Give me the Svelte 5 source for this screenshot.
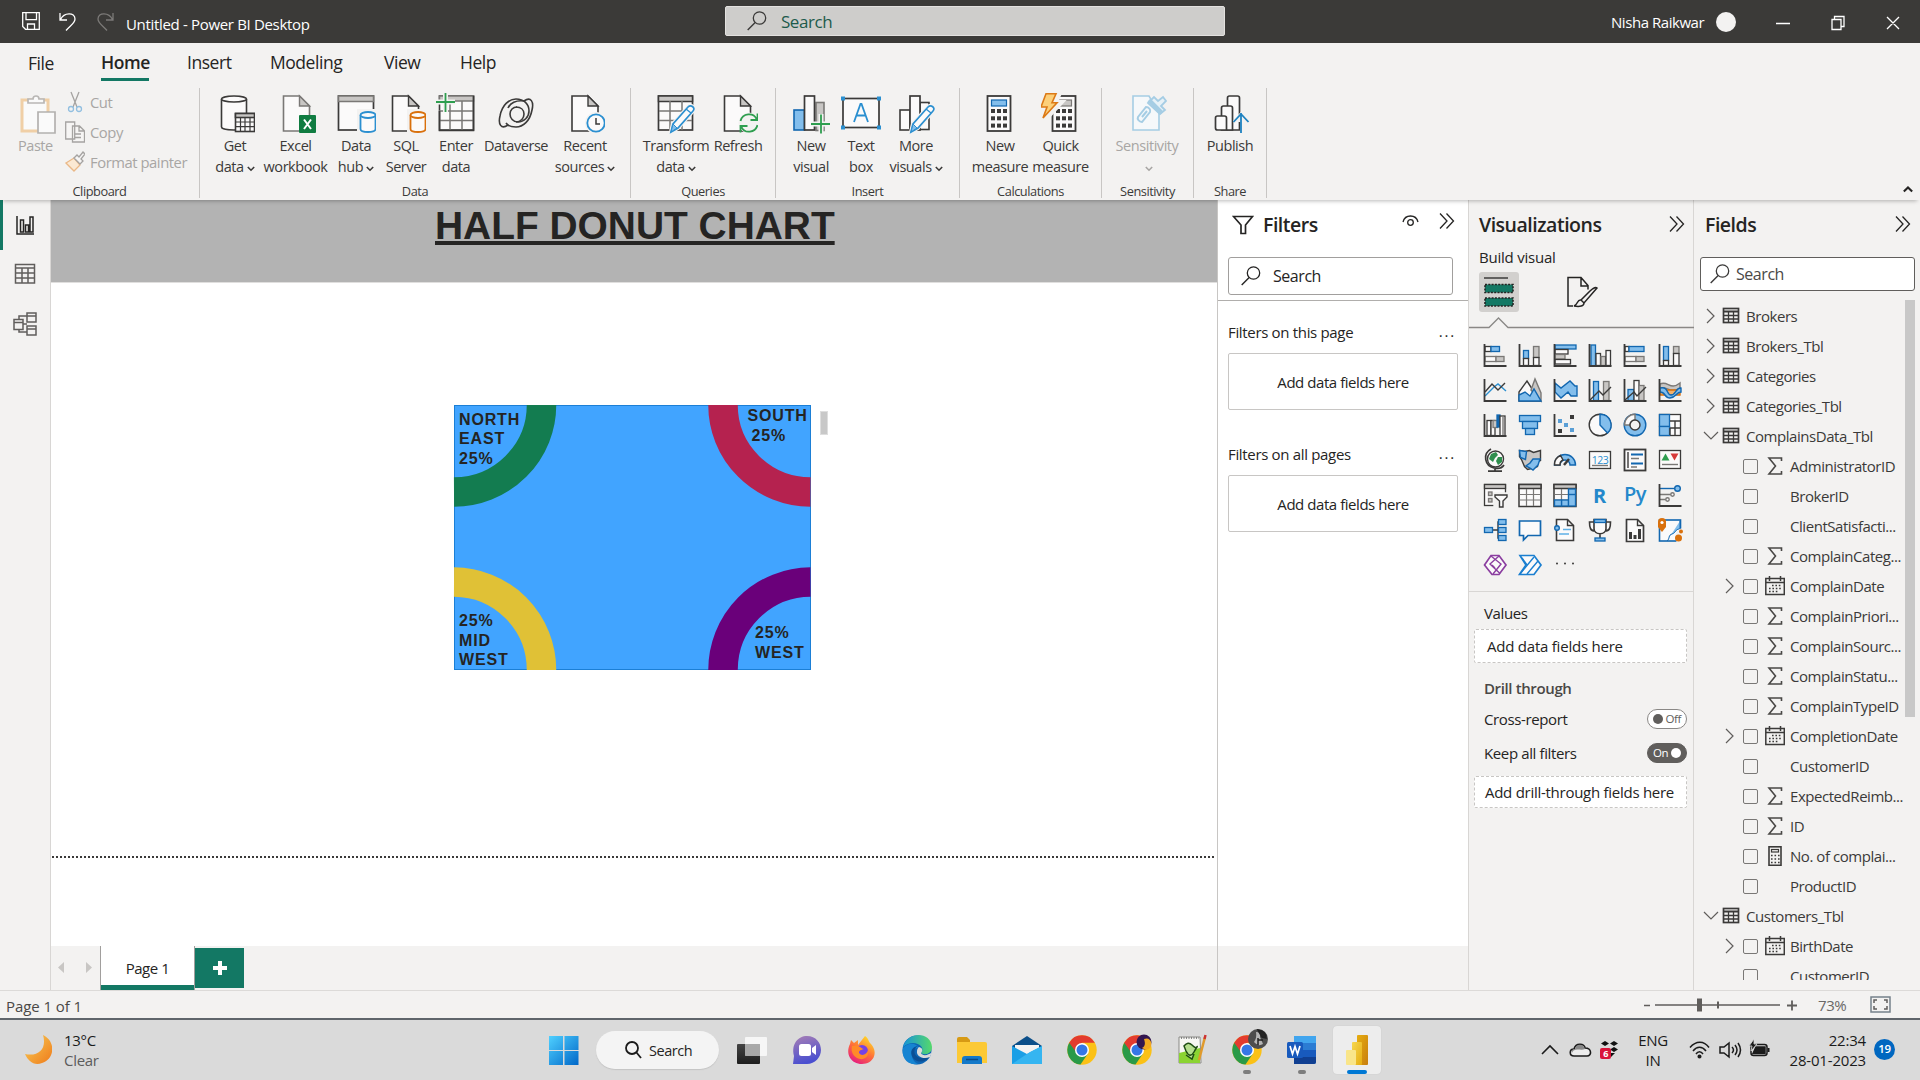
<script>
  // Shared icon colours
  const K = '#3b3a39', W = '#fbfafa', B = '#83beec', BS = '#1267b0', G = '#c8c6c4', GS = '#7a7876', A = '#2b8fd0';
  const r = (x, y, w, h, f = W, s = K, sw = 1.3) =>
    `<rect x="${x}" y="${y}" width="${w}" height="${h}" fill="${f}" stroke="${s}" stroke-width="${sw}"/>`;
  const p = (d, s = K, f = 'none', sw = 1.4) =>
    `<path d="${d}" fill="${f}" stroke="${s}" stroke-width="${sw}"/>`;
  const c = (x, y, rad, f = W, s = K, sw = 1.4) =>
    `<circle cx="${x}" cy="${y}" r="${rad}" fill="${f}" stroke="${s}" stroke-width="${sw}"/>`;
  const cyl = (x, y, w, h, s, sw = 1.6) =>
    p(`M${x} ${y + 3}v${h - 6}c0 4 ${w} 4 ${w} 0v-${h - 6}`, s, W, sw) +
    `<ellipse cx="${x + w / 2}" cy="${y + 3}" rx="${w / 2}" ry="3" fill="${W}" stroke="${s}" stroke-width="${sw}"/>`;
  const page = (x, y, w = 26, h = 35, s = K) =>
    p(`M${x} ${y}h${w - 10}l10 10v${h - 10}h-${w}z`, s, W, 1.6) + p(`M${x + w - 10} ${y}v10h10z`, s, G, 1.4);
  const pencil = (x, y) =>
    p(`M${x} ${y}l2-8 15-17c3-3 8 1 5 4l-15 17z`, '#f3f2f1', '#f3f2f1', 4) +
    p(`M${x} ${y}l2-8 15-17c3-3 8 1 5 4l-15 17z`, A, W, 1.7) + p(`M${x} ${y}l2-8 4 4z`, A, B, 1) + p(`M${x + 15} ${y - 23}l5 4`, A);
  const calc = (x, y, top) => {
    let o = r(x, y, 23, 35, W, K, 1.8) + r(x + 4, y + 4, 15, 6, top, top === G ? GS : BS, 1.2);
    for (let i = 0; i < 3; i++) for (let j = 0; j < 3; j++) o += `<rect x="${x + 3.5 + j * 6}" y="${y + 13 + i * 7.3}" width="4" height="4" fill="${K}"/>`;
    return o;
  };

  const rib = {
    get: cyl(6.5, 3, 25, 34, K) + r(20.5, 20.5, 19, 18, W, K, 1.6) + r(20.5, 20.5, 19, 4, G, K, 1.6) + p('M20 29h20M20 33.700h20M25.500 24v14M30 24v14M35 24v14', K, 'none', 1.2),
    excel: page(7.5, 3, 26, 35, GS) + `<rect x="23" y="22" width="17" height="18" rx="1" fill="#107c41"/>` + p('M28 26.500l7 9.500M35 26.500l-7 9.500', '#fff', 'none', 2),
    hub: r(2.5, 3, 35, 34, W, K, 1.7) + r(2.5, 3, 35, 5.5, G, GS, 1.5) + r(22, 17, 18, 23, '#f3f2f1', '#f3f2f1', 2) + cyl(24.5, 19, 15, 20, A, 1.8),
    sql: page(6.5, 3, 26, 35) + r(22, 17, 18, 23, '#f3f2f1', '#f3f2f1', 2) + cyl(24.5, 19, 15, 20, '#d9700c', 1.8),
    enter: r(3.5, 3, 34, 34, W, K, 1.6) + r(3.5, 3, 34, 5, G, GS, 1.5) + p('M3 18h35M3 27.500h35M14 8v29M26 8v29', GS, 'none', 1.5) + p('M3.500 18v19.500h34V3', K, 'none', 1.6) + p('M0 9h19M9.500 0v19', '#f3f2f1', 'none', 5) + p('M0 9h19M9.500 0v19', '#2e9e4f', 'none', 1.8),
    dataverse: `<g fill="none" stroke="${K}" stroke-width="1.6"><path d="M12 32c-7 5-10-1-8-9C6 12 13 6 20 6c8 0 13 5 13 12 0 6-5 11-11 11-5 0-8-4-8-8 0-4 3-7 7-7"/><path d="M28 8c7-5 10 1 8 9-2 11-9 17-16 17-5 0-8-1-10-4M20 14c5 0 8 3 8 7 0 4-3 8-8 8M12 15c2-5 8-8 16-7"/></g>`,
    recent: page(7, 3, 26, 35) + c(31, 30, 10, '#f3f2f1', '#f3f2f1', 2) + c(31, 30, 8.7, W, A, 1.8) + p('M31 25v6h4', K, 'none', 1.5),
    transform: r(2.5, 3, 34, 34, W, K, 1.7) + r(2.5, 3, 34, 5.5, G, K, 1.5) + p('M3 18h33M3 27.500h33M14 8v29M26 8v29', GS, 'none', 1.5) + pencil(15, 39),
    refresh: page(6.5, 3, 26, 35) + c(31, 30, 10, '#f3f2f1', '#f3f2f1', 1) + p('M22.500 28c2-8 13-9 16-2M39.500 32c-2 8-13 9-16 2M39.500 20.500v6.500h-7M22.500 39.500v-6.500h7', '#2e9e4f', 'none', 1.8),
    newvisual: r(3, 17, 10.5, 20, B, BS, 1.6) + r(25, 9.500, 8, 28, G, GS, 1.6) + r(13.5, 3, 10, 34, W, K, 1.7) + p('M20 31h20M30 21v20', '#f3f2f1', 'none', 5) + p('M20 31h19M30 21.500v19', '#2e9e4f', 'none', 1.8),
    text: r(2, 5.5, 36, 29, W, K, 1.7) + [[2, 5.5], [38, 5.5], [2, 34.5], [38, 34.5]].map(([x, y]) => `<rect x="${x - 2}" y="${y - 2}" width="4" height="4" fill="${A}"/>`).join('') + p('M13 29l6.500-18h1l6.500 18M15.500 22.500h9', A, 'none', 1.8),
    more: r(4, 17, 10, 20, W, K, 1.6) + r(24, 9.500, 9, 27, W, K, 1.6) + r(14, 3, 10, 34, W, K, 1.7) + pencil(15, 39),
    newm: calc(7.5, 3, B),
    quick: calc(11.500, 3, G) + p('M8 0h11l-4 9h6L6 25l3-12H3z', '#f3f2f1', '#f3f2f1', 4) + p('M5 .8h10l-4 9h5L2 25l4-11H0z', '#dc7a17', '#fcd07a', 1.6),
    sens: p('M6 3h16l10 17v17H6z', '#a5cde4', '#f5f8fa', 1.6) + p('M11 24l8-10c3 0 5 3 4 5l-8 10c-3 0-5-3-4-5zM15 24l5-6', '#a5cde4', 'none', 2) + p('M21 10l6-6 4 4 5-4 3 4-5 5 4 4-5 4z', '#a5cde4', '#e6f1f7', 1.8) + p('M22 7l13 13', '#a5cde4', 'none', 4),
    publish: `<g fill="${W}" stroke="${K}" stroke-width="1.7"><path d="M17.500 37V5q0-2 2-2h8q2 0 2 2v32z"/><path d="M11.500 37V15q0-2 2-2h7q2 0 2 2v22z"/><path d="M5.500 35V25q0-2 2-2h7q2 0 2 2v12h-9q-2 0-2-2z"/></g>` + p('M24 29l7-8 8 8', '#f3f2f1', '#f3f2f1', 3) + p('M31 20v20M23.500 29l7.500-8 7.500 8', '#1e82c0', 'none', 1.8)
  };

  const groups = [
    { name: 'Data', w: 431, pad: 10, items: [['get', 'Get', 'data', 50, 1], ['excel', 'Excel', 'workbook', 71], ['hub', 'Data', 'hub', 50, 1], ['sql', 'SQL', 'Server', 50], ['enter', 'Enter', 'data', 50], ['dataverse', 'Dataverse', '', 70], ['recent', 'Recent', 'sources', 68, 1]] },
    { name: 'Queries', w: 145, pad: 9, items: [['transform', 'Transform', 'data', 72, 1], ['refresh', 'Refresh', '', 52]] },
    { name: 'Insert', w: 184, pad: 12, items: [['newvisual', 'New', 'visual', 46], ['text', 'Text', 'box', 54], ['more', 'More', 'visuals', 56, 1]] },
    { name: 'Calculations', w: 142, pad: 10, items: [['newm', 'New', 'measure', 60], ['quick', 'Quick', 'measure', 61]] },
    { name: 'Sensitivity', w: 92, pad: 8, off: true, items: [['sens', 'Sensitivity', '', 74, 1]] },
    { name: 'Share', w: 73, pad: 8, items: [['publish', 'Publish', '', 56]] }
  ];

  const ax = p('M1.500 1v22h22', K, 'none', 1.8);
  const grid = (f = W) => r(1, 1.5, 22, 22, f, K, 1.5) + r(1, 1.5, 22, 4, G, K, 1.5) + p('M1.500 11.500h21M1.500 17h21M8.500 6v17M15.500 6v17', GS, 'none', 1.2);
  const viz = [
    r(2, 13.500, 11, 5, W, GS) + r(13, 13.500, 8, 5, G, GS) + r(2, 3.500, 6, 5, W, K) + r(8, 3.500, 8.500, 5, B, BS) + ax,
    r(5.500, 7.500, 5, 8, B, BS) + r(5.500, 15.500, 5, 7, W) + r(15.500, 3.500, 5.500, 11, G, GS) + r(15.500, 14.500, 5.500, 8, W) + ax,
    r(2, 2, 21, 4, B, BS) + r(2, 6.500, 13, 4.500, W) + r(2, 11.500, 10, 4.500, G, GS) + r(2, 16.500, 15.500, 4.500, W) + ax,
    r(3, 2, 4.500, 21, B, BS) + r(8, 10.500, 4.500, 12, W) + r(13, 13.500, 4.500, 9, G, GS) + r(18, 7.500, 4.500, 15, W) + ax,
    r(2, 13.500, 11, 5, W, GS) + r(13, 13.500, 8, 5, G, GS) + r(2, 3.500, 4, 5, W) + r(6, 3.500, 15, 5, B, BS) + ax,
    r(5.500, 3.500, 5, 14, B, BS) + r(5.500, 17.500, 5, 5, W) + r(15.500, 3.500, 5.500, 7, G, GS) + r(15.500, 10.500, 5.500, 12, W) + ax,
    p('M2 18l9-9 4-3 8 7', A) + p('M2 14l7-8 6 6 7-7', K) + ax,
    p('M1 23V14L9 3l13 20z', K, W) + p('M13 12l4-11 6 14v8z', GS, G) + p('M1 23v-6l6-3 5 4 4-7 7 12z', BS, B),
    p('M2 5l6 5 9-7 5 5h2v10h-6l-3-4-7 6-6-6z', BS, B) + ax,
    r(5.500, 3.500, 5, 19, B, BS) + r(15.500, 3.500, 5.500, 19, G, GS) + p('M2 22l9-9 4 4 8-8', K) + ax,
    r(5, 11.500, 6, 11, B, BS) + r(11, 2.500, 5, 20, W) + r(16, 7.500, 5, 15, G, GS) + p('M2 22l9-8 3 4 9-9', K) + ax,
    p('M2 6c8-4 10 7 20-1v5c-10 6-13-2-20 0z', GS, G) + p('M2 12h20v5H2z', '#d9700c', '#f4b26b') + p('M2 10c9-2 6 7 11 7s5-8 10-7v4c-5 0-5 6-11 6S8 14 2 14z', BS, B) + ax,
    r(4, 7.500, 4, 15, W) + r(8, 7.500, 4, 15, W) + r(10, 7.500, 4.500, 7, G, GS) + r(14, 2, 3, 12, '#1267b0', BS) + r(17, 3, 5, 20, W) + p('M20 3v20', GS) + ax,
    r(1.500, 2.500, 21, 6, B, BS) + r(4.500, 8.500, 15, 7, B, BS) + r(7.500, 15.500, 9, 6, B, BS),
    ax + `<path d="M17 2h4v4h-4zM5 16h4v4H5z" fill="${K}"/><path d="M5 6h4v4H5zM11 10h4v4h-4zM17 15h4v4h-4z" fill="#5a9fd6"/>`,
    c(12, 12, 10.800) + p('M12 12V1.200A10.800 10.800 0 0 1 19.500 20z', BS, B),
    c(12, 12, 10.800, B, BS) + p('M1.500 12A10.500 10.500 0 0 1 12 1.300V7a5 5 0 0 0-5 5z', GS, W) + c(12, 12, 5, '#f3f2f1', K),
    r(1.500, 1.500, 21, 21, W) + r(1.500, 1.500, 10, 12, B, BS) + r(1.500, 13.500, 10, 9, B, BS) + p('M12 8h10M17 8v14M12 15h5M17 15h5M12 15v7', K),
    c(12.500, 11, 8, W) + `<path d="M8 6l5-2 2 3-3 3-2 4-4-3zM15 9l4 0 0 5-4 3-2-4z" fill="#2f8f4e"/>` + p('M8 1C-1 6 2 18 11 20c4 1 8 0 10-3M12 20v3M5 23.200h14', K, 'none', 1.700),
    p('M1.500 2.500l5 1 5-1 4 2 7-2v10l-3 1v5l-6 2-4 1-3-3-3-7-2-3z', K, G) + p('M1.500 2.500l7 1-1 8 -5-2zM12 15l3-4h7l-2 6-5 5-3-2-4-2z', BS, B),
    p('M1.500 17a10.500 10.500 0 0 1 21 0h-5.500a5 5 0 0 0-10 0z', BS, B) + p('M1.500 17a10 10 0 0 1 6-9.500l2.500 4.500a5 5 0 0 0-3 5z', K, W) + p('M11 17l5-6', K, 'none', 2.500),
    r(1.500, 3.500, 21, 17, W) + `<text x="12" y="15.500" text-anchor="middle" font-family="Open Sans, sans-serif" font-size="10.500" fill="${A}">123</text>` + p('M4 17.500h16', GS),
    r(1.500, 1.500, 21, 21, W, K, 1.800) + p('M5 4v16', K) + p('M8 6.500h12M8 15.500h12', BS, 'none', 2) + p('M8 10.500h8M8 19h6', GS),
    r(1.500, 2.500, 21, 18, W) + `<path d="M3.500 12.500l4-7 4 7z" fill="#2f9e4f"/><path d="M12.500 5.500h8l-4 7z" fill="#d63a3a"/>` + p('M4 16.500h16', GS),
    r(1.500, 1.500, 21, 21, W) + r(1.500, 1.500, 21, 4, G) + r(5.500, 9, 3.500, 3.500, G, GS) + r(5.500, 15.500, 3.500, 3.500, G, GS) + p('M11 24V10h13v14z', '#f3f2f1', '#f3f2f1') + p('M12 12h12v2l-4 4v6h-3.500v-6l-4.500-4z', K, W),
    grid(),
    grid() + r(8.500, 17, 7, 6, B, BS) + r(15.500, 6, 7, 17, B, BS) + r(1.500, 17, 7, 6, B, BS) + p('M16 11.500h6', BS),
    `<text x="11.500" y="20" text-anchor="middle" font-family="Open Sans, sans-serif" font-weight="700" font-size="20" fill="#2488cb">R</text>`,
    `<text x="12" y="18" text-anchor="middle" font-family="Open Sans, sans-serif" font-weight="600" font-size="20" fill="#2488cb">Py</text>`,
    p('M2 5.500h16', BS) + c(19.500, 5.500, 2.800, B, BS) + p('M2 11.500h11M2 16.500h6', GS) + c(14.500, 11.500, 1.700, W, GS) + c(9.500, 16.500, 1.700, W, GS) + ax,
    p('M10 12h5V4h2M15 12v8h2M15 12h2', K) + r(1.500, 9.500, 8, 5, B, BS) + r(15.500, 1.500, 7.500, 5, B, BS) + r(15.500, 9.500, 7.500, 5, B, BS) + r(15.500, 17.500, 7.500, 5, B, BS),
    p('M1.500 3h21v14.500H10L5.500 22v-4.500h-4z', BS, W, 1.700),
    p('M3.500 8V1.500h11l6 6v15H3.500V12', K, W, 1.600) + p('M14.500 1.500v6h6', K) + c(4, 10, 2.300, B, BS) + p('M10 11.500h8M6 16h10', '#5fb0e6'),
    p('M6 1.500h12v9c0 7-12 7-12 0zM6 4H1.500c0 6 1 9 5.500 9M18 4h4.500c0 6-1 9-5.500 9M12 16v4', K, W, 1.600) + r(6.500, 1.500, 11, 3, B, BS) + r(7, 20, 10, 3, B, BS),
    p('M3.500 1.500h11l6 6v16h-17z', K, W, 1.700) + p('M14.500 1.500v6h6', K) + `<path d="M6 14h3v7H6zM10.500 17h3v4h-3zM15 11h3v10h-3z" fill="${K}"/>`,
    r(1.500, 2, 21, 21, W, BS, 1.600) + p('M22 3v8c-5 0-4 4-8 5s-2 5-5 7', BS, B, 1) + p('M19 24h6V11h-2c-3 1-4 3-5 6z', '#f3f2f1', '#f3f2f1', 1) + `<path d="M0 4q0-4 4-4t4 4v5l-4 5-4-5z" fill="#d9700c"/><circle cx="4" cy="4.500" r="1.600" fill="#fff"/><circle cx="20.500" cy="20" r="3.500" fill="#d9700c"/><circle cx="23" cy="13.500" r="2" fill="#d9700c"/>`,
    p('M1.500 12L8 2.500h8l7 9.500-7 9.500H9z', '#8b3ea0', W, 1.700) + p('M8 3l10 8-8 10M16 3L7 11l10 9.500M9 12l3 3', '#8b3ea0'),
    p('M2 2.500h14l7 9.500-7 9.500H1.500L8 12z', '#1b7fd0', W, 1.700) + p('M2 21l14-17M9 21L20 8M9 12L4 5', '#1b7fd0'),
    `<g fill="${K}"><circle cx="4" cy="10.500" r="1"/><circle cx="12" cy="10.500" r="1"/><circle cx="20" cy="10.500" r="1"/></g>`
  ];

  // level, open state, icon, label
  const fields = [
    [0, '>', 'table', 'Brokers'], [0, '>', 'table', 'Brokers_Tbl'], [0, '>', 'table', 'Categories'], [0, '>', 'table', 'Categories_Tbl'],
    [0, 'v', 'table', 'ComplainsData_Tbl'], [1, '', 'sum', 'AdministratorID'], [1, '', '', 'BrokerID'], [1, '', '', 'ClientSatisfacti...'],
    [1, '', 'sum', 'ComplainCateg...'], [1, '>', 'date', 'ComplainDate'], [1, '', 'sum', 'ComplainPriori...'], [1, '', 'sum', 'ComplainSourc...'],
    [1, '', 'sum', 'ComplainStatu...'], [1, '', 'sum', 'ComplainTypeID'], [1, '>', 'date', 'CompletionDate'], [1, '', '', 'CustomerID'],
    [1, '', 'sum', 'ExpectedReimb...'], [1, '', 'sum', 'ID'], [1, '', 'calc', 'No. of complai...'], [1, '', '', 'ProductID'],
    [0, 'v', 'table', 'Customers_Tbl'], [1, '>', 'date', 'BirthDate'], [1, '', '', 'CustomerID']
  ];
  const fi = {
    table: r(2.500, 2.500, 15, 14, 'none', K, 1.700) + p('M2 5.500h16', K, 'none', 2) + p('M2 9.500h16M2 13h16M7.500 5v12M12.500 5v12', K, 'none', 1.300),
    sum: p('M16.500 5V2H4l6.500 8L4 18h12.500v-3', '#4a4846', 'none', 1.600),
    date: r(.8, 2.500, 18.500, 16, 'none', K, 1.500) + p('M1 6.500h18M4.500 0v5M15.500 0v5', K, 'none', 1.500) + p('M7 9.500h10M4 12.500h13M4 15.500h10', K, 'none', 1.600).replace('/>', ' stroke-dasharray="1.600 1.800"/>'),
    calc: r(4, .8, 12, 18.500, 'none', K, 1.600) + r(6.500, 3.500, 7, 2.500, 'none', K, 1.200) + p('M6 9.500h9M6 13h9M6 16.500h9', K, 'none', 1.600).replace('/>', ' stroke-dasharray="1.600 1.900"/>')
  };

  const chrome = `<circle cx="15" cy="15" r="14.700" fill="#fbc116"/><path d="M15 15L2.200 7.700A14.700 14.700 0 0 0 13.500 29.600L21 18.500z" fill="#299a48"/><path d="M2.200 7.700A14.700 14.700 0 0 1 27.800 7.700H15L9 17z" fill="#e33b2e"/><circle cx="15" cy="15" r="7" fill="#fff"/><circle cx="15" cy="15" r="5.500" fill="#3577e5"/>`;
  const apps = [
    { i: `<defs><linearGradient id="tv" y2="1" x2="0"><stop stop-color="#444"/><stop offset="1" stop-color="#1d1d1d"/></linearGradient></defs><rect x="0" y="9" width="23" height="20" rx="1" fill="url(#tv)"/><rect x="8" y="2" width="22" height="19" rx="1" fill="#fff" fill-opacity=".75"/><path d="M8 9h15v12H8z" fill="#999" fill-opacity=".7"/>` },
    { i: `<defs><linearGradient id="ct" x2=".3" y2="1"><stop stop-color="#a87fb4"/><stop offset="1" stop-color="#4a4fd0"/></linearGradient></defs><path d="M1 29l1-8C-1 9 6 1 15 1s14 7 14 14-6 14-14 14z" fill="url(#ct)"/><rect x="7" y="9" width="12" height="12" rx="2.500" fill="#fff"/><path d="M20 13l4-3v10l-4-3z" fill="#fff"/>` },
    { i: `<defs><linearGradient id="ff" x1=".8" x2=".2" y2="1"><stop stop-color="#ffe226"/><stop offset=".5" stop-color="#ff7139"/><stop offset="1" stop-color="#e31587"/></linearGradient></defs><path d="M18 1c4 3 3 5 6 8 8 9 2 20-9 20S-2 19 3 9l1-4 3 3 4-3v5z" fill="url(#ff)"/><circle cx="15" cy="16" r="6" fill="#7542e5"/><path d="M5 11c7-2 8 2 12 3-3 1-5 1-5 4 3 4 8 1 9-3 2 8-6 11-11 8s-6-8-5-12z" fill="#ff8a28"/>` },
    { i: `<defs><linearGradient id="eg" x2="1"><stop stop-color="#1793d8"/><stop offset="1" stop-color="#55d96b"/></linearGradient></defs><circle cx="15" cy="15" r="14.500" fill="#0d65b5"/><path d="M1 12C5-4 29-4 30 12c0 6-6 9-11 6 6-7-8-15-18-6z" fill="url(#eg)"/><path d="M1 13c6-7 14-4 16 0-7-2-11 11-1 16C4 31-1 21 1 13z" fill="#1684d2"/><path d="M17 11c-7 1-6 12 3 12 4 0 6-1 8-2-3 6-12 8-17 2-4-6-1-12 6-12z" fill="#0b4f95"/><path d="M17 12c4 1 4 4 2 6 1 3 7 3 11-1l-2 5c-7 3-14-1-13-6 0-2 1-3 2-4z" fill="#dadada"/>` },
    { i: `<path d="M0 4q0-2 2-2h8l3 3v9H0z" fill="#d79a14"/><path d="M0 7h28q2 0 2 2v19H0z" fill="#fcc935"/><path d="M5 29v-5q0-3 3-3h14q3 0 3 3v5z" fill="#1479c9"/><path d="M9 24.500h12" stroke="#0a4a86" stroke-width="1.500"/>` },
    { i: `<path d="M0 11L15 1l15 10v18H0z" fill="#0b4f8a"/><path d="M3 10h24v12H3z" fill="#f3f3f3"/><path d="M0 11l15 8 15-8v18H0z" fill="#1a9fe6"/><path d="M0 29L18 17l12-6v18z" fill="#35b5f1"/>` },
    { i: chrome },
    { i: chrome + `<circle cx="22" cy="7" r="7.500" fill="#33164f"/><path d="M22 4c7-3 9 6 6 9s-6 1-8 0c4-2 3-6 2-9z" fill="#f2a921"/>` },
    { i: `<path d="M2 2h21l1 26H2z" fill="#f7f7f4" stroke="#8a8a86" stroke-width="1"/><path d="M2 18l21-5v15H2z" fill="#8bd432"/><path d="M7 11q4-5 8-1t5 2-3 5-8-1zM9 20l6 4 2-5" stroke="#1f4d14" stroke-width="1.500" fill="#b6df8f"/><path d="M4 3h18" stroke="#666" stroke-width="1.500" stroke-dasharray="1 1.500"/><path d="M28 2L22 25" stroke="#e09a2b" stroke-width="2.500"/><path d="M28.500 0l-1 4" stroke="#c33" stroke-width="2.500"/>` },
    { i: chrome + `<circle cx="26" cy="4" r="10" fill="#4d4d4d"/><path d="M24-3q5 0 4 5l3 7q-5 3-9-2 3-4 2-10z" fill="#b5b5b5"/><path d="M26-5q8 1 8 8l-4-1zM26 5h5M26 3v7" stroke="#222" fill="#252525" stroke-width="1.500"/>`, dot: true },
    { i: `<rect x="7" y="1" width="22" height="28" rx="2" fill="#2b7cd3"/><path d="M7 1h22v7H7z" fill="#41a5ee"/><path d="M7 15h22v7H7z" fill="#185abd"/><path d="M7 22h22v5q0 2-2 2H7z" fill="#103f91"/><rect x="0" y="7" width="16" height="16" rx="1.500" fill="#185abd"/><path d="M3 11l2.500 8L8 11.500 10.500 19 13 11" stroke="#fff" stroke-width="1.700" fill="none"/>`, dot: true },
    { i: `<defs><linearGradient id="pb" y2="1"><stop stop-color="#e6ad10"/><stop offset="1" stop-color="#c87e0e"/></linearGradient><linearGradient id="pc" y2="1"><stop stop-color="#f6d751"/><stop offset="1" stop-color="#e6ad10"/></linearGradient></defs><rect x="15" y="0" width="11" height="30" rx="1" fill="url(#pb)"/><rect x="10" y="7" width="10" height="23" rx="1" fill="url(#pc)"/><rect x="4" y="15" width="10" height="15" rx="1" fill="#f9e589"/>`, active: true }
  ];
</script>

{#snippet chev(cls)}
  <svg class="chev {cls}" viewBox="0 0 10 7" width="8" height="6"><path d="M1 1l4 4 4-4" fill="none" stroke="currentColor" stroke-width="2" /></svg>
{/snippet}
{#snippet glass(size, color)}
  <svg width={size} height={size} viewBox="0 0 20 20"><circle cx="12.500" cy="7" r="6.200" fill="none" stroke={color} stroke-width="1.300" /><path d="M8.200 11.600L.7 19" stroke={color} stroke-width="1.400" /></svg>
{/snippet}
{#snippet dbl()}
  <svg width="18" height="18" viewBox="0 0 18 18"><path d="M2 1.500l7 7.500-7 7.500M8.500 1.500l7 7.500-7 7.500" fill="none" stroke="#252423" stroke-width="1.300" /></svg>
{/snippet}

<div class="app">
  <header class="title">
    <div class="quick">
      <svg width="18" height="18" viewBox="0 0 18 18" fill="none" stroke="#fff" stroke-width="1.300"><path d="M.7.7h16.600v16.600H3.500L.7 14.500zM4 .7v7h10.500v-7M5.500 17v-5h7v5" /></svg>
      <svg width="18" height="19" viewBox="0 0 18 19" fill="none" stroke="#fff" stroke-width="1.300"><path d="M1 1v7h7M1.500 7.500C5 0 16 0 16 7c0 4-4 6-9 11.500" /></svg>
      <svg width="18" height="19" viewBox="0 0 18 19" fill="none" stroke="#7c7a78" stroke-width="1.300"><path d="M17 1v7h-7M16.500 7.500C13 0 2 0 2 7c0 4 4 6 9 11.500" /></svg>
    </div>
    <span class="doc">Untitled - Power BI Desktop</span>
    <div class="tsearch">{@render glass(20, '#3b3a39')}<span>Search</span></div>
    <span class="user">Nisha Raikwar</span>
    <i class="avatar"></i>
    <svg class="win" width="126" height="16" viewBox="0 0 126 16" fill="none" stroke="#fff" stroke-width="1.300"><path d="M1 8.500h14M57 4.500h9v10h-9zM59.500 4V1.500h9.500v10h-3M112 2l12 12M124 2l-12 12" /></svg>
  </header>

  <nav class="tabs">
    <span class="t-file">File</span><span class="t-home">Home</span><span class="t-ins">Insert</span><span class="t-mod">Modeling</span><span class="t-view">View</span><span>Help</span>
  </nav>

  <section class="ribbon">
    <div class="group clip">
      <div class="cliprow">
        <div class="paste">
          <svg width="40" height="40" viewBox="0 0 40 40"><g fill="#fafafa" stroke-width="1.700"><path d="M4 6h26v31H4z" stroke="#f0cfa6" stroke-width="3" /><path d="M10 9V5h5c0-4 6-4 6 0h5v4z" stroke="#b9b7b5" /><path d="M20 18h17v21H20z" stroke="#b3b1af" /></g></svg>
          <span>Paste</span>
        </div>
        <div class="clips">
          <div><svg width="20" height="22" viewBox="0 0 20 22" fill="none" stroke="#a5a3a1" stroke-width="1.300"><path d="M6 1l6 15M14 1L8 16" /><circle cx="6" cy="18" r="2.500" stroke="#92bfe0" /><circle cx="14" cy="18" r="2.500" stroke="#92bfe0" /></svg><span>Cut</span></div>
          <div><svg width="20" height="22" viewBox="0 0 20 22" fill="#f6f5f4" stroke="#a5a3a1" stroke-width="1.300"><path d="M.7 1h9v17h-9zM7.500 5h7l5 5v11h-12zM14 5v5h5M10 13h6M10 16.500h6" /></svg><span>Copy</span></div>
          <div><svg width="20" height="22" viewBox="0 0 20 22" fill="#f6f5f4" stroke="#a5a3a1" stroke-width="1.300"><path d="M1 12l8-5 6 7-6 6z" fill="#fbe9d3" stroke="#eab887" /><path d="M9 7l3-3 2 2 4-5 2 2-4 5 2 2-3 3z" /></svg><span>Format painter</span></div>
        </div>
      </div>
      <div class="gname">Clipboard</div>
    </div>
    {#each groups as g}
      <div class="group" class:off={g.off} style:width="{g.w}px">
        <div class="items" style:padding-left="{g.pad}px">
          {#each g.items as [icon, a, b, w, drop]}
            <div class="item" style:width="{w}px">
              <svg width="40" height="42" viewBox="0 0 40 42">{@html rib[icon]}</svg>
              <span>{a}</span>
              <span>{b}{#if drop}{@render chev(b ? '' : 'solo')}{/if}</span>
            </div>
          {/each}
        </div>
        <div class="gname">{g.name}</div>
      </div>
    {/each}
    <div class="collapse">{@render chev('up')}</div>
  </section>

  <main>
    <aside class="rail">
      <div class="on"><svg width="24" height="24" viewBox="0 0 24 24" fill="none" stroke="#252423" stroke-width="1.500"><path d="M4 3v18h17M7.500 7h3v12h-3zM12.500 12h3v7h-3zM17 4h3v15h-3z" /></svg></div>
      <div><svg width="24" height="24" viewBox="0 0 24 24" fill="none" stroke="#605e5c" stroke-width="1.500"><path d="M2.500 2.500h19v18.500h-19zM2 6h20M2 11h20M2 16h20M9 6v15M15 6v15" /></svg></div>
      <div><svg width="26" height="26" viewBox="0 0 26 26" fill="none" stroke="#605e5c" stroke-width="1.500"><path d="M2 8.500h9v10H2zM2 11.500h9M15 2h9v9h-9zM15 5h9M15 15h9v9h-9zM15 18h9M11 13h4M7 8V5h8M7 18v3h8" /></svg></div>
    </aside>

    <section class="work">
      <div class="banner"><h1>HALF DONUT CHART</h1></div>
      <div class="canvas">
        <svg class="donut" width="376" height="268" viewBox="453 404 376 268" font-family="Liberation Sans, Arial, sans-serif" font-weight="700" font-size="16" letter-spacing=".85" fill="#252423">
          <rect x="454.500" y="405.500" width="356" height="264" fill="#41a4ff" stroke="#1b7fd6" />
          <g fill="none" stroke-width="29.500">
            <path d="M454 492A88 87 0 0 0 541.500 405" stroke="#137c50" />
            <path d="M723 405A88 87 0 0 0 810.500 492" stroke="#b5224f" />
            <path d="M454 582A88 88 0 0 1 541.500 670" stroke="#e0c136" />
            <path d="M810.500 582A88 88 0 0 0 723 670" stroke="#6a007a" />
          </g>
          <text x="459" y="425">NORTH</text><text x="459" y="444">EAST</text><text x="459" y="464">25%</text>
          <text x="747.500" y="421">SOUTH</text><text x="751.500" y="441">25%</text>
          <text x="459" y="626">25%</text><text x="459" y="646">MID</text><text x="459" y="665">WEST</text>
          <text x="755" y="638">25%</text><text x="755" y="658">WEST</text>
          <rect x="820.500" y="411.500" width="7" height="23" fill="#c8c8c8" stroke="#dedede" />
        </svg>
        <div class="dots"></div>
      </div>
      <div class="pages">
        <svg width="49" height="44" viewBox="0 0 49 44" fill="#c8c6c4"><path d="M13 16v11l-6-5.500zM35 16v11l6-5.500z" /></svg>
        <div class="ptab">Page 1</div>
        <div class="padd"><svg width="16" height="16" viewBox="0 0 16 16"><path d="M8 1v14M1 8h14" stroke="#fff" stroke-width="4" /></svg></div>
      </div>
    </section>

    <section class="filters">
      <div class="fhead">
        <svg width="22" height="20" viewBox="0 0 22 20"><path d="M1.500 1.500h19l-7 8.500v8.500h-4.500V10z" fill="none" stroke="#252423" stroke-width="1.700" /></svg>
        <h2>Filters</h2>
        <svg class="eye" width="17" height="12" viewBox="0 0 17 12" fill="none" stroke="#252423" stroke-width="1.300"><path d="M1 7c2-8 13-8 15 0" /><circle cx="8.500" cy="7.500" r="2.800" /></svg>
        <span class="fd">{@render dbl()}</span>
      </div>
      <div class="fsearch">{@render glass(20, '#252423')}<span>Search</span></div>
      <div class="fblock first"><div class="flabel"><span>Filters on this page</span><b>...</b></div><div class="drop">Add data fields here</div></div>
      <div class="fblock"><div class="flabel"><span>Filters on all pages</span><b>...</b></div><div class="drop">Add data fields here</div></div>
    </section>

    <section class="viz">
      <div class="vhead"><h2>Visualizations</h2>{@render dbl()}</div>
      <div class="bv">Build visual</div>
      <div class="modes">
        <div class="build"><svg width="32" height="32" viewBox="0 0 32 32"><path d="M1 2h24" stroke="#252423" stroke-width="1.300" /><path d="M2 8.500h28v8H2zM2 22h28v8H2z" fill="#137864" stroke="#252423" stroke-width="1.600" stroke-dasharray="2 1.300" /></svg></div>
        <svg width="32" height="32" viewBox="0 0 32 32" fill="none" stroke="#252423" stroke-width="1.500"><path d="M7 30H2V1.500h13l7 8v4M15 1.500V10h7M31 12L18 27l-3-3 9-9c3-3 6-4 7-3zM15 24c-4-1-3 5-7 6 6 1 10 0 10-3" /></svg>
      </div>
      <svg class="notch" width="225" height="12" viewBox="0 0 225 12"><path d="M0 9.500h20l9.500-9.500 9.500 9.500h186" fill="none" stroke="#8a8886" stroke-width="1.300" /></svg>
      <div class="vgrid">
        {#each viz as v}<svg width="24" height="24" viewBox="0 0 24 24" overflow="visible">{@html v}</svg>{/each}
      </div>
      <div class="wells">
        <div class="wl">Values</div>
        <div class="well a">Add data fields here</div>
        <div class="wl drill">Drill through</div>
        <div class="wl row"><span>Cross-report</span><span class="tog"><i></i>Off</span></div>
        <div class="wl row k"><span>Keep all filters</span><span class="tog onn">On<i></i></span></div>
        <div class="well b">Add drill-through fields here</div>
      </div>
    </section>

    <section class="fields">
      <div class="vhead"><h2>Fields</h2>{@render dbl()}</div>
      <div class="fsearch s2">{@render glass(20, '#3b3a39')}<span>Search</span></div>
      <div class="list">
        <div class="tree">
          {#each fields as [lvl, st, ic, label]}
            <div class="frow" class:child={lvl}>
              <span class="ar">
                {#if st === '>'}<svg width="10" height="16" viewBox="0 0 10 16"><path d="M1 1l7 7-7 7" fill="none" stroke="#605e5c" stroke-width="1.200" /></svg>
                {:else if st === 'v'}<svg width="16" height="10" viewBox="0 0 16 10"><path d="M1 1l7 7 7-7" fill="none" stroke="#605e5c" stroke-width="1.200" /></svg>{/if}
              </span>
              {#if lvl}<i class="cb"></i>{/if}
              <svg class="fic" width="20" height="20" viewBox="0 0 20 20">{@html fi[ic] ?? ''}</svg>
              <span class="fl">{label}</span>
            </div>
          {/each}
        </div>
        <div class="sb"></div>
      </div>
    </section>
  </main>

  <footer class="status">
    <span class="pg">Page 1 of 1</span>
    <svg width="160" height="20" viewBox="0 0 160 20" fill="none" stroke="#605e5c"><path d="M4 10.500h6M15 10h125" stroke-width="1.500" /><path d="M147 10.500h10M152 5.500v10" stroke-width="1.800" /><path d="M59.500 3.500v13" stroke-width="5" /><path d="M78 6.500v7" stroke-width="2" /></svg>
    <span class="pct">73%</span>
    <svg width="21" height="17" viewBox="0 0 21 17" fill="none" stroke="#605e5c" stroke-width="1.500"><path d="M1 1h19v15H1z" stroke="#76818a" /><path d="M4 7V4h3M14 4h3v3M17 10v3h-3M7 13H4v-3" /></svg>
  </footer>

  <footer class="task">
    <div class="weather">
      <svg width="28" height="30" viewBox="0 0 28 30"><defs><linearGradient id="mn" y2="1"><stop stop-color="#f8cf57" /><stop offset="1" stop-color="#ef7a1a" /></linearGradient></defs><path d="M19 0c13 6 12 24-1 28C10 31 4 26 1 19c14 3 22-6 18-19z" fill="url(#mn)" /></svg>
      <div class="two"><span>13°C</span><span class="dim">Clear</span></div>
    </div>
    <div class="dock">
      <svg class="start" width="30" height="30" viewBox="0 0 30 30"><defs><linearGradient id="wn" x2="1" y2="1"><stop stop-color="#4fd0ff" /><stop offset="1" stop-color="#0067c8" /></linearGradient></defs><path d="M0 1h14v14H0zM15.500 1h14v14h-14zM0 16h14v14H0zM15.500 16h14v14h-14z" fill="url(#wn)" /></svg>
      <div class="pill"><svg width="17" height="18" viewBox="0 0 17 18" fill="none" stroke="#1b1b1b" stroke-width="1.800"><circle cx="7" cy="7" r="6" /><path d="M11.500 11.500L16 17" /></svg><span>Search</span></div>
      {#each apps as a}
        <div class="appi" class:active={a.active}><svg width="30" height="30" viewBox="0 0 30 30" overflow="visible">{@html a.i}</svg>{#if a.dot || a.active}<i></i>{/if}</div>
      {/each}
    </div>
    <div class="tray">
      <svg width="80" height="24" viewBox="0 0 80 24"><path d="M2 16l8-8 8 8" fill="none" stroke="#1b1b1b" stroke-width="1.600" /><path d="M34 18c-5 0-5-7 0-7 2-7 11-5 11-1 7 0 7 8 2 8z" fill="#ececec" stroke="#1b1b1b" stroke-width="1.600" /><path d="M32 15c2-6 9-2 13-4-1-5-9-6-10 0-3 0-4 2-3 4z" fill="#888" /><path d="M65 3l4 2.500-4 2.500-4-2.500zM74 3l4 2.500-4 2.500-4-2.500zM74 9l4 2.500-4 2.500-4-2.500zM70 15l5 0-4 4z" fill="#111" /><rect x="60" y="10" width="11" height="11" rx="2" fill="#d9143a" /><text x="65.500" y="19" text-anchor="middle" font-family="Open Sans, sans-serif" font-size="9" font-weight="700" fill="#fff">6</text></svg>
      <div class="two mid"><span>ENG</span><span>IN</span></div>
      <svg class="net" width="84" height="24" viewBox="0 0 84 24" fill="none" stroke="#1b1b1b" stroke-width="1.500"><path d="M2 9.500c6-7 14-7 19 0M5 13c4-5 9-5 13 0M8 16c2-3 5-3 7 0" /><circle cx="11.500" cy="18.500" r="1.300" fill="#1b1b1b" /><path d="M32 9h4l5-4v14l-5-4h-4zM44 9q3 3 0 6M47 7q4 5 0 10M50 5q5 7 0 14" /><rect x="63" y="6.500" width="16" height="11" rx="2.500" /><path d="M68 9h9v6.500H65z" fill="#1b1b1b" /><path d="M80.500 10v4" stroke-width="2" /><path d="M66 1l-5 7h3l-1 5 6-7h-3z" fill="#1b1b1b" stroke="#dadada" stroke-width=".8" /></svg>
      <div class="two end"><span>22:34</span><span>28-01-2023</span></div>
      <i class="badge">19</i>
    </div>
  </footer>
</div>

<style>
  :global(body) { margin: 0; overflow: hidden; }
  .app { width: 1920px; height: 1080px; display: flex; flex-direction: column; font-family: 'Open Sans', 'Noto Sans', sans-serif; font-size: 15px; letter-spacing: -0.03em; color: #252423; background: #f3f2f1; overflow: hidden; }
  .app * { box-sizing: border-box; }
  svg { flex: none; display: block; }
  span { white-space: nowrap; }
  i { font-style: normal; }
  h1, h2 { margin: 0; }
  h2 { font-size: 19.500px; font-weight: 600; line-height: 26px; letter-spacing: -0.025em; }

  .title { height: 43px; flex: none; display: flex; align-items: center; background: #3b3a38; color: #fff; }
  .quick { display: flex; gap: 19px; width: 126px; padding-left: 22px; }
  .doc { width: 599px; padding-top: 5px; letter-spacing: -0.022em; }
  .tsearch { width: 500px; height: 30px; display: flex; align-items: center; gap: 14px; padding-left: 21px; background: #cecdcb; border: 1px solid #e3e1df; border-radius: 2px; color: #1d5b4b; font-size: 17px; margin-bottom: 1px; }
  .user { margin-left: 386px; width: 105px; }
  .avatar { width: 20px; height: 20px; border-radius: 50%; background: #f3f2f1; }
  .win { margin-left: 39px; margin-top: 3px; }

  .tabs { height: 45px; flex: none; display: flex; padding: 6px 0 0 28px; font-size: 17.500px; }
  .tabs span { height: 32px; line-height: 27px; }
  .tabs .t-file { width: 73px; line-height: 28px; }
  .tabs .t-home { width: 48px; margin-right: 38px; font-weight: 600; border-bottom: 3px solid #137864; }
  .t-ins { width: 83px; }
  .t-mod { width: 114px; }
  .t-view { width: 76px; }

  .ribbon { height: 112px; flex: none; display: flex; position: relative; box-shadow: 0 4px 4px -3px rgba(0, 0, 0, 0.28); z-index: 2; background: #f3f2f1; }
  .group { height: 110px; display: flex; flex-direction: column; border-right: 1px solid #c8c6c4; }
  .items { display: flex; flex: 1; padding-top: 5px; }
  .item { display: flex; flex-direction: column; align-items: center; font-size: 14.500px; line-height: 20px; color: #3b3a39; }
  .item svg { margin-bottom: 1px; }
  .item span { display: flex; align-items: center; height: 20px; }
  .item span + span { margin-top: 1px; }
  .item .chev, .collapse .chev { margin: 3px 0 0 3px; }
  .off .item { color: #a8a6a4; }
  .gname { height: 18px; line-height: 18px; margin-bottom: -2px; text-align: center; font-size: 12.800px; color: #3b3a39; }
  .clip { width: 200px; color: #a8a6a4; font-size: 14.800px; }
  .cliprow { display: flex; flex: 1; }
  .paste { width: 65px; padding: 6px 0 0 18px; }
  .paste span { display: block; margin-top: 2px; line-height: 20px; font-size: 14.500px; }
  .clips { margin-top: -1px; }
  .clips div { display: flex; align-items: center; gap: 5px; height: 30px; }
  .collapse { margin-left: auto; align-self: flex-end; padding: 0 8px 8px 0; }
  :global(.chev.up) { transform: rotate(180deg) scale(1.300); }

  main { display: flex; height: 790px; flex: none; }
  .rail { width: 51px; border-right: 1px solid #d8d6d4; display: flex; flex-direction: column; }
  .rail div { height: 50px; display: flex; align-items: center; justify-content: center; padding-bottom: 2px; }
  .rail .on { border-left: 3px solid #137864; padding: 0 4px 0 0; }
  .work { width: 1166px; display: flex; flex-direction: column; background: #fff; }
  .banner { height: 83px; background: #b3b3b3; border-bottom: 1px solid #e0dfde; padding-left: 384px; }
  h1 { width: max-content; font: 700 38.900px/46px 'Liberation Sans', Arial, sans-serif; letter-spacing: 0; text-decoration: underline; text-decoration-thickness: 4px; text-underline-offset: 2px; padding-top: 3px; }
  .canvas { height: 663px; display: flex; flex-direction: column; }
  .donut { margin: 121px 0 0 402px; }
  .dots { margin: 184px 1px 0; height: 2px; background: repeating-linear-gradient(90deg, #3b3a39 0 2px, transparent 2px 4px); }
  .pages { height: 44px; display: flex; background: #f3f2f1; }
  .ptab { width: 95px; background: #fff; border: solid #a19f9d; border-width: 0 1px; box-shadow: inset 0 -5px #137864; text-align: center; line-height: 44px; }
  .padd { width: 49px; height: 40px; margin-top: 2px; background: #137864; display: grid; place-items: center; }

  .filters { width: 252px; height: 790px; background: linear-gradient(#fff 746px, #f3f2f1 746px); border-left: 1px solid #c8c6c4; border-right: 1px solid #d8d6d4; }
  .fhead { height: 57px; display: flex; padding: 12px 10px 0 14px; }
  .fhead svg { margin-top: 3px; }
  .fhead h2 { margin-left: 9px; width: 139px; }
  .fhead .eye { margin-top: 3px; }
  .fd { margin: -3px 0 0 19px; }
  .fsearch { width: 225px; height: 38px; margin-left: 10px; display: flex; align-items: center; gap: 12px; padding-left: 12px; background: #fff; border: 1px solid #a19f9d; border-radius: 3px; font-size: 16px; }
  .first { border-top: 1px solid #b0aeac; margin-top: 5px; padding-top: 19px; }
  .fblock { height: 122px; padding-left: 10px; }
  .fblock.first { height: 142px; }
  .flabel { display: flex; justify-content: space-between; line-height: 24px; height: 24px; width: 228px; letter-spacing: -0.022em; }
  .flabel b { font-weight: 400; letter-spacing: 1.800px; line-height: 23px; }
  .drop { margin-top: 9px; width: 230px; height: 57px; border: 1px solid #c8c6c4; border-radius: 2px; text-align: center; line-height: 56px; }

  .viz { width: 225px; border-right: 1px solid #d8d6d4; }
  .vhead { display: flex; justify-content: space-between; padding: 12px 7px 0 10px; height: 45px; }
  .vhead :global(svg) { margin-top: 3px; }
  .bv { padding-left: 10px; line-height: 25px; height: 27px; letter-spacing: -0.015em; }
  .modes { display: flex; gap: 47px; padding-left: 10px; height: 46px; align-items: flex-start; }
  .modes > svg { margin-top: 4px; }
  .build { width: 40px; height: 40px; background: #d2d0ce; border-radius: 3px; display: grid; place-items: center; }
  .notch { overflow: visible; }
  .vgrid { display: grid; grid-template-columns: repeat(6, 35px); grid-auto-rows: 35px; padding: 13px 0 0 13.500px; height: 262px; border-bottom: 1px solid #d8d6d4; }
  .wells { padding: 9px 6px 0 5px; }
  .wl { padding-left: 10px; height: 24px; line-height: 24px; letter-spacing: -0.025em; }
  .well { background: #fff; border: 1px dashed #c8c6c4; border-radius: 2px; letter-spacing: -0.015em; }
  .well.a { margin-top: 4px; height: 34px; line-height: 33px; padding-left: 12px; }
  .well.b { margin-top: 11px; height: 32px; line-height: 31px; padding-left: 10px; letter-spacing: -0.018em; }
  .drill { margin-top: 13px; font-weight: 600; color: #4a4846; }
  .row { display: flex; justify-content: space-between; align-items: center; margin-top: 7px; }
  .row.k { margin-top: 10px; }
  .tog { width: 40px; height: 20px; border: 1px solid #8a8886; border-radius: 10px; background: #fff; display: flex; align-items: center; justify-content: space-between; padding: 0 5px; font-size: 11.500px; color: #605e5c; }
  .tog i { width: 10px; height: 10px; border-radius: 50%; background: #605e5c; }
  .onn { background: #605e5c; border-color: #605e5c; color: #fff; }
  .onn i { background: #fff; }

  .fields { width: 226px; }
  .fields .vhead { height: 57px; padding-left: 11px; padding-right: 8px; }
  .s2 { width: 215px; height: 34px; margin-left: 6px; padding-left: 9px; gap: 6px; border-color: #605e5c; color: #4a4846; }
  .list { height: 680px; margin-top: 9px; display: flex; overflow: hidden; }
  .tree { width: 211px; padding-top: 1px; color: #3b3a39; }
  .frow { display: flex; align-items: center; height: 30px; padding-left: 7px; }
  .ar { width: 20px; display: flex; justify-content: center; }
  .child .ar { margin-left: 19px; }
  .cb { width: 15px; height: 15px; border: 1px solid #797775; border-radius: 2px; margin: 0 7px 0 3px; flex: none; }
  .fl { margin-left: 5px; }
  .sb { width: 10px; height: 417px; background: #c8c8c8; }

  .status { height: 30px; flex: none; display: flex; align-items: center; border-top: 1px solid #dcdad8; border-bottom: 2px solid #5f656b; padding-left: 6px; color: #4a4846; }
  .pg { width: 1634px; letter-spacing: -0.005em; padding-top: 2px; }
  .pct { width: 52px; margin-left: 18px; color: #6a6866; }

  .task { flex: 1; display: flex; background: #dadada; }
  .weather { width: 549px; display: flex; gap: 12px; padding: 15px 0 0 24px; }
  .two { display: flex; flex-direction: column; line-height: 20px; font-size: 15px; letter-spacing: -0.02em; margin-top: -5px; color: #1b1b1b; }
  .dim { color: #5c5c5c; }
  .dock { display: flex; width: 991px; }
  .start { margin: 15px 17px 0 0; }
  .pill { width: 123px; height: 38px; margin: 11px 5px 0 0; border-radius: 19px; background: #f4f4f4; display: flex; align-items: center; gap: 7px; padding-left: 29px; box-shadow: 0 1px 1px #c4c4c4; font-size: 14.500px; }
  .appi { width: 48px; height: 48px; margin: 6px 3px 0 4px; border-radius: 4px; display: flex; flex-direction: column; align-items: center; padding-top: 9px; }
  .appi i { width: 8px; height: 4px; border-radius: 2px; background: #7d7d7d; margin-top: 5px; }
  .appi.active { background: #ededed; box-shadow: 0 0 1px #bbb; }
  .appi.active i { width: 20px; background: #0078d4; }
  .tray { display: flex; padding-top: 15px; }
  .tray > svg { margin-top: 3px; }
  .mid { width: 66px; text-align: center; }
  .net { margin-left: 2px; }
  .end { width: 94px; text-align: right; letter-spacing: -0.012em; }
  .badge { width: 21px; height: 21px; margin: 4px 0 0 8px; border-radius: 50%; background: #0067c0; color: #fff; font-size: 11.500px; font-weight: 600; line-height: 20px; text-align: center; }
</style>
